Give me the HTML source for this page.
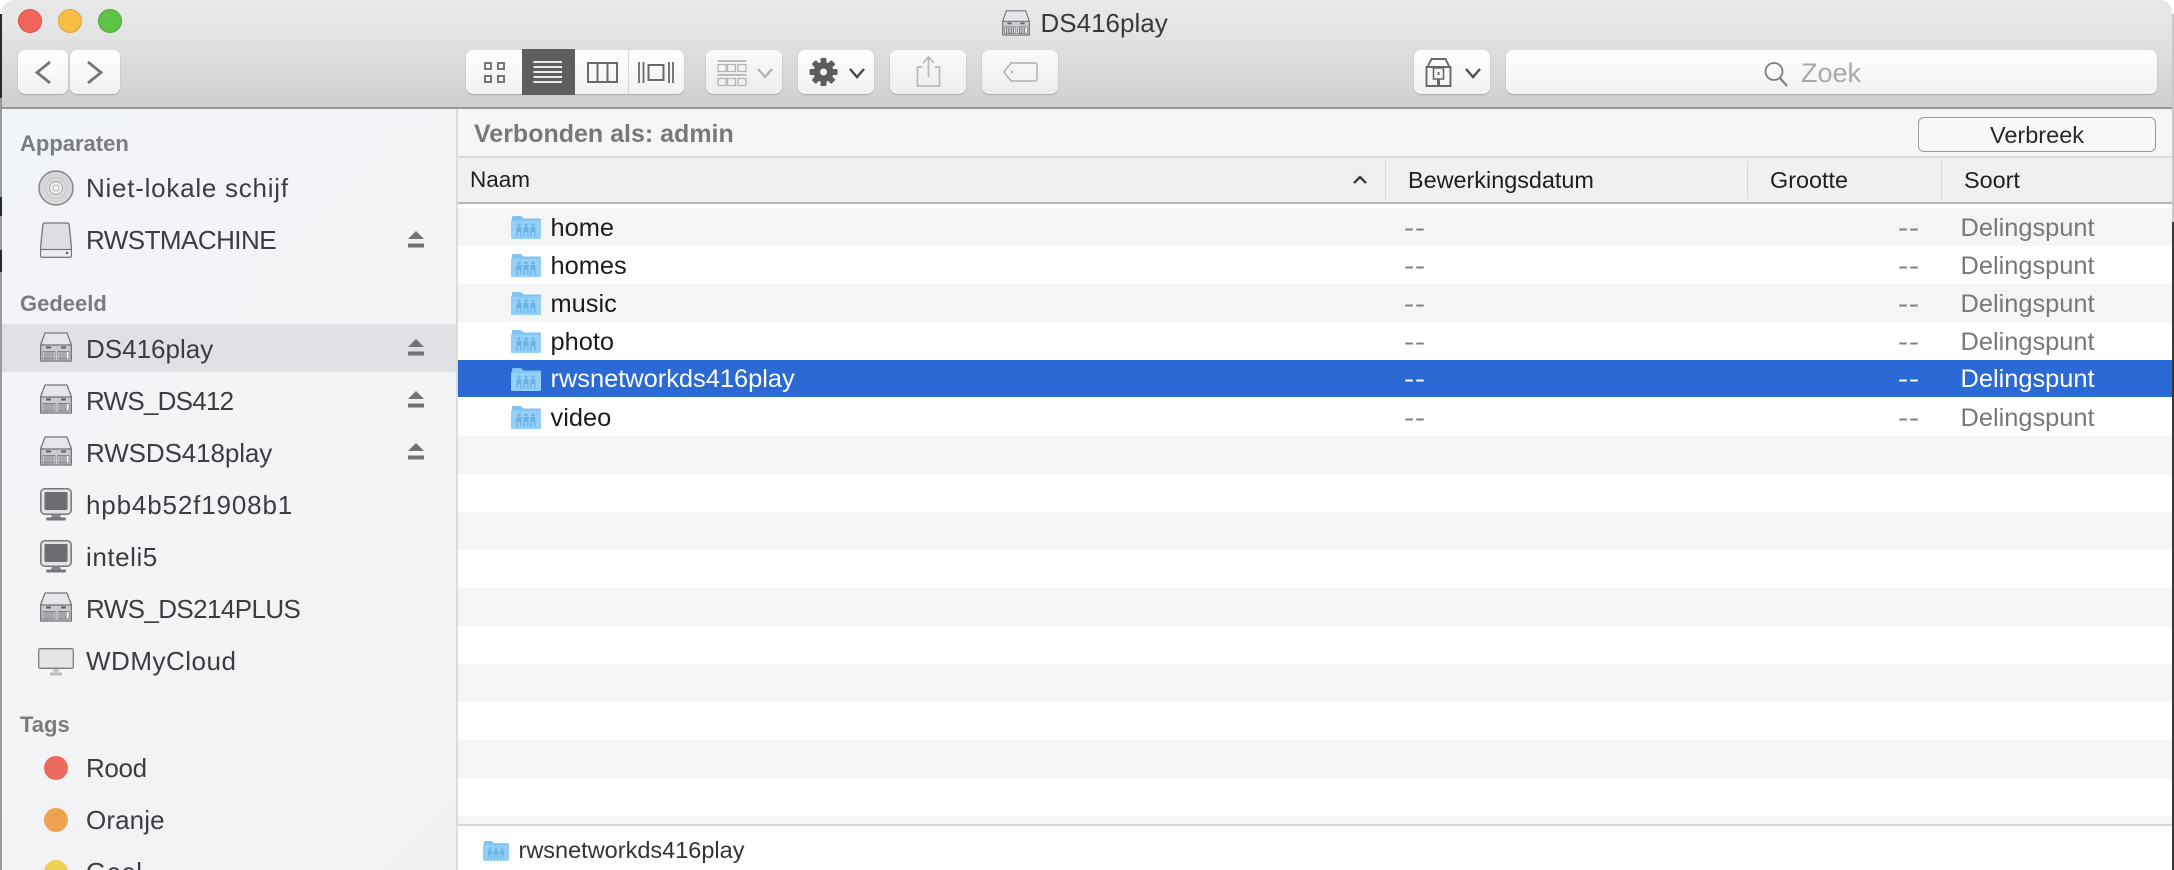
<!DOCTYPE html>
<html><head><meta charset="utf-8"><title>DS416play</title>
<style>
html,body{margin:0;padding:0;width:2174px;height:870px;overflow:hidden;background:#fff}
body{position:relative;font-family:"Liberation Sans",sans-serif}
div,span,svg{position:absolute}
.t{white-space:nowrap;line-height:40px;height:40px}
.btn{top:50px;height:44px;border-radius:7px;background:linear-gradient(#fff,#f1f1f1);box-shadow:0 1px 1px #a8a8a8,0 0 1px #bbb}
.dim{background:linear-gradient(#fafafa,#ededed)}
.side{left:86px;font-size:26px;color:#3a3d42;letter-spacing:.35px}
.head{left:20px;font-size:22px;font-weight:bold;color:#7a7c7f}
.r{left:458px;width:1714px;height:38px}
.n{left:550.5px;font-size:25.4px;color:#1c1c1c}
.d1{left:1404px;font-size:25.4px;color:#7f7f7f;letter-spacing:.6px;transform:scaleX(1.2);transform-origin:0 50%}
.d2{left:1898px;font-size:25.4px;color:#7f7f7f;letter-spacing:.6px;transform:scaleX(1.2);transform-origin:0 50%}
.s{left:1960.5px;font-size:25.4px;color:#77787a}
.h{font-size:23.4px;color:#1f1f1f;top:160px}
.sel{color:#fff}
</style></head><body>
<svg width="0" height="0" style="left:0;top:0">
<defs>
<symbol id="nas" viewBox="0 0 32 30">
<path d="M5 1H27L31.5 13V28.5H.5V13Z" fill="#e4e6e9" stroke="#74777b" stroke-width="1.3"/>
<rect x=".7" y="13" width="30.6" height="16" fill="#c9cbce" stroke="#74777b" stroke-width="1.3"/>
<path d="M6 15.5h5M21 15.5h5" stroke="#5d6064" stroke-width="2"/>
<rect x="3" y="19.5" width="12" height="7.5" fill="#fff" stroke="#6a6d71" stroke-width=".8"/>
<rect x="18" y="19.5" width="11" height="7.5" fill="#fff" stroke="#6a6d71" stroke-width=".8"/>
<path d="M5 20v7M7 20v7M9 20v7M11 20v7M13 20v7M20 20v7M22 20v7M24 20v7M26 20v7" stroke="#6a6d71" stroke-width="1.2"/>
</symbol>
<symbol id="pc" viewBox="0 0 32 33">
<rect x=".8" y=".8" width="30.4" height="25.4" rx="4" fill="#e2e4e6" stroke="#74777b" stroke-width="1.5"/>
<rect x="4.5" y="4" width="23" height="18" rx="1.5" fill="#6b6d70"/>
<path d="M12 26.5h8l1 3H11Z" fill="#85888b"/><rect x="6" y="29.5" width="20" height="3" rx="1.2" fill="#74777b"/>
</symbol>
<symbol id="mon" viewBox="0 0 36 28">
<rect x=".7" y=".7" width="34.6" height="19.6" rx="1.8" fill="#e4e5e7" stroke="#7a7d81" stroke-width="1.3"/>
<path d="M15 21h6v3.5h-6Z" fill="#c8cacc"/><rect x="12" y="24.5" width="12" height="3" fill="#bcbec1"/>
</symbol>
<symbol id="ej" viewBox="0 0 16 17">
<path d="M8 0 16 8H0Z" fill="#6f7276"/><rect y="12.5" width="16" height="4" fill="#6f7276"/>
</symbol>
<symbol id="fo" viewBox="0 0 30 24">
<path d="M1 2.5Q1 1 2.5 1H10L12.500 3.5H28.5Q30 3.5 30 5V22.5Q30 24 28.5 24H1.5Q0 24 0 22.5Z" fill="#80c2f0"/>
<path d="M0 5.5H30V22.5Q30 24 28.5 24H1.5Q0 24 0 22.5Z" fill="#93cff6"/>
<g fill="#6ab3e7"><circle cx="8" cy="10" r="1.500"/><circle cx="15" cy="10" r="1.500"/><circle cx="22" cy="10" r="1.500"/>
<path d="M5.500 12h5v10h-1.200v-5h-2.600v5H5.500ZM12.500 12h5v10h-1.200v-5h-2.600v5h-1.200ZM19.500 12h5v10h-1.200v-5h-2.600v5h-1.200Z"/></g>
</symbol>
</defs></svg>

<!-- window edges -->
<div style="left:0;top:0;width:2px;height:870px;background:#9a9a9a"></div>
<div style="left:0;top:14px;width:2px;height:84px;background:#2a2a2a"></div>
<div style="left:0;top:197px;width:2px;height:19px;background:#2a2a2a"></div>
<div style="left:0;top:250px;width:2px;height:22px;background:#2a2a2a"></div>
<div style="left:2172px;top:0;width:2px;height:222px;background:#c8c8c8"></div>
<div style="left:2172px;top:222px;width:2px;height:648px;background:#3a3735"></div>

<!-- toolbar -->
<div style="left:0;top:0;width:14px;height:14px;background:#fff"></div>
<div style="left:2160px;top:0;width:14px;height:14px;background:#fff"></div>
<div style="left:2px;top:0;width:2170px;height:108px;border-radius:12px 12px 0 0;background:linear-gradient(#e9e8e9 0,#e6e5e6 25%,#cfcfcf 100%)"></div>
<div style="left:2px;top:107px;width:2170px;height:2px;background:#9a9a9a"></div>
<div style="left:18px;top:9px;width:24px;height:24px;border-radius:50%;background:#f0645a;box-sizing:border-box;border:1px solid #dc5148"></div>
<div style="left:58px;top:9px;width:24px;height:24px;border-radius:50%;background:#f7bd45;box-sizing:border-box;border:1px solid #dfa23a"></div>
<div style="left:98px;top:9px;width:24px;height:24px;border-radius:50%;background:#5fc348;box-sizing:border-box;border:1px solid #4fa83c"></div>

<svg style="left:1000px;top:10px" width="32" height="26" viewBox="0 0 32 30"><use href="#nas"/></svg>
<div class="t" style="left:1040.5px;top:3px;font-size:26px;color:#3a3a3a">DS416play</div>

<div class="btn" style="left:18px;width:50px"></div>
<div class="btn" style="left:70px;width:50px"></div>
<svg style="left:18px;top:50px" width="102" height="44" fill="none" stroke="#767676" stroke-width="2.800"><path d="M32 12 19 22.5 32 33M70 12 83 22.5 70 33"/></svg>

<div class="btn" style="left:466px;width:218px"></div>
<div style="left:522px;top:49px;width:53px;height:46px;background:#5e5e5e"></div>
<div style="left:628px;top:50px;width:1px;height:44px;background:#d8d8d8"></div>
<svg style="left:466px;top:50px" width="218" height="44" fill="none">
<g stroke="#777" stroke-width="2"><rect x="19" y="13" width="6" height="6"/><rect x="32" y="13" width="6" height="6"/><rect x="19" y="26" width="6" height="6"/><rect x="32" y="26" width="6" height="6"/></g>
<path d="M67.5 12h28.5M67.5 17h28.5M67.5 22h28.5M67.5 27h28.5M67.5 32h28.5" stroke="#fff" stroke-width="1.800"/>
<g stroke="#6a6a6a" stroke-width="2"><rect x="122" y="13" width="29" height="19"/><path d="M131.5 13v19M141.5 13v19"/>
<path d="M173 12v21M177.5 12v21M203 12v21M207 12v21" stroke-width="1.800"/><rect x="182.5" y="15" width="15" height="15"/></g>
</svg>

<div class="btn dim" style="left:706px;width:76px"></div>
<svg style="left:706px;top:50px" width="76" height="44" fill="none" stroke="#b4b4b4" stroke-width="1.700">
<path d="M11.5 11h29M11.5 25h29"/><path d="M12 14.5h8v7h-8zM21.500 14.5h8v7h-8zM32 14.5h8v7h-8zM12 28.5h8v7h-8zM21.500 28.5h8v7h-8zM32 28.5h8v7h-8z" stroke-width="1.300"/>
<path d="M52 19l7 8 7-8" stroke-width="2.400"/></svg>

<div class="btn" style="left:798px;width:76px"></div>
<svg style="left:798px;top:50px" width="76" height="44">
<g transform="translate(25.5 22)"><circle r="10" fill="#5d5d5d"/><g fill="#5d5d5d"><rect x="-3" y="-14" width="6" height="28" rx="1"/><rect x="-3" y="-14" width="6" height="28" rx="1" transform="rotate(45)"/><rect x="-3" y="-14" width="6" height="28" rx="1" transform="rotate(90)"/><rect x="-3" y="-14" width="6" height="28" rx="1" transform="rotate(135)"/></g><circle r="3.5" fill="#f4f4f4"/></g>
<path d="M52 19l7 8 7-8" fill="none" stroke="#474747" stroke-width="2.400"/></svg>

<div class="btn dim" style="left:890px;width:76px"></div>
<svg style="left:890px;top:50px" width="76" height="44" fill="none" stroke="#b9b9b9" stroke-width="1.700">
<path d="M32 17h-4.500v19h22V17H45M38.500 27V8M33 13 38.500 7 44 13"/></svg>

<div class="btn dim" style="left:982px;width:76px"></div>
<svg style="left:982px;top:50px" width="76" height="44" fill="none" stroke="#b9b9b9" stroke-width="1.700">
<path d="M29 13h24q2 0 2 2v14q0 2-2 2H29l-7-9Z"/><circle cx="30" cy="22" r="1.200" fill="#b0b0b0" stroke="none"/></svg>

<div class="btn" style="left:1414px;width:76px"></div>
<svg style="left:1414px;top:50px" width="76" height="44" fill="none" stroke="#686868" stroke-width="1.900">
<path d="M13.500 17 17.500 9h14l4 8M12.500 17h24v19h-24Z"/><path d="M19.500 18h10v11h-10z" stroke-width="1.600"/><path d="M24.500 29v7" stroke-width="3"/><rect x="23.500" y="22" width="2" height="3" fill="#686868" stroke="none"/>
<path d="M52 19l7 8 7-8" stroke-width="2.400" stroke="#505050"/></svg>

<div class="btn" style="left:1506px;width:651px"></div>
<svg style="left:1762px;top:60px" width="30" height="28" fill="none" stroke="#7e7e7e" stroke-width="1.800"><circle cx="12" cy="11.500" r="8.500"/><path d="M18 18l7 8" stroke-width="2.200"/></svg>
<div class="t" style="left:1801px;top:53px;font-size:27px;color:#a9a9a9">Zoek</div>

<!-- sidebar -->
<div style="left:2px;top:109px;width:454px;height:761px;background:linear-gradient(135deg,#f1f4f8 0%,#f3f4f6 50%,#f1f1f1 100%)"></div>
<div style="left:456px;top:109px;width:2px;height:761px;background:#dcdcdc"></div>
<div style="left:2px;top:324px;width:454px;height:48px;background:#dfe1e4"></div>

<div class="t head" style="top:124px">Apparaten</div>
<div class="t head" style="top:284px">Gedeeld</div>
<div class="t head" style="top:705px">Tags</div>

<svg style="left:38px;top:170px" width="36" height="36"><circle cx="18" cy="18" r="17" fill="#d5d6d8" stroke="#85878a" stroke-width="1.500"/><circle cx="18" cy="18" r="10" fill="#dcdde0" stroke="#c4c5c8"/><circle cx="18" cy="18" r="6.500" fill="#eceded" stroke="#a2a4a7"/><circle cx="18" cy="18" r="3" fill="#f6f6f7" stroke="#b4b6b9"/></svg>
<div class="t side" style="top:168px;letter-spacing:.75px">Niet-lokale schijf</div>

<svg style="left:40px;top:222px" width="32" height="36" viewBox="0 0 32 36"><path d="M4.500 1H27.500Q29 1 29.200 3L31.500 26V33Q31.500 35.300 29 35.300H3Q.5 35.300 .5 33V26L2.800 3Q3 1 4.500 1Z" fill="#dcdee1" stroke="#75787c" stroke-width="1.300"/><path d="M1 27.500H31" stroke="#75787c" stroke-width="1.200"/><path d="M1.300 28.200H30.700V33Q30.700 34.600 29 34.600H3Q1.300 34.600 1.300 33Z" fill="#eceef0"/><circle cx="27" cy="31" r="1.200" fill="#555"/></svg>
<div class="t side" style="top:220px;letter-spacing:-.54px">RWSTMACHINE</div>

<svg style="left:40px;top:332px" width="32" height="30"><use href="#nas"/></svg>
<div class="t side" style="top:329px;letter-spacing:0">DS416play</div>
<svg style="left:40px;top:384px" width="32" height="30"><use href="#nas"/></svg>
<div class="t side" style="top:381px;letter-spacing:-.75px">RWS_DS412</div>
<svg style="left:40px;top:436px" width="32" height="30"><use href="#nas"/></svg>
<div class="t side" style="top:433px;letter-spacing:-.1px">RWSDS418play</div>
<svg style="left:40px;top:488px" width="32" height="33"><use href="#pc"/></svg>
<div class="t side" style="top:485px;letter-spacing:.85px">hpb4b52f1908b1</div>
<svg style="left:40px;top:540px" width="32" height="33"><use href="#pc"/></svg>
<div class="t side" style="top:537px;letter-spacing:.55px">inteli5</div>
<svg style="left:40px;top:592px" width="32" height="30"><use href="#nas"/></svg>
<div class="t side" style="top:589px;letter-spacing:-.6px">RWS_DS214PLUS</div>
<svg style="left:38px;top:648px" width="36" height="28"><use href="#mon"/></svg>
<div class="t side" style="top:641px;letter-spacing:.5px">WDMyCloud</div>

<svg style="left:408px;top:231px" width="16" height="17"><use href="#ej"/></svg>
<svg style="left:408px;top:339px" width="16" height="17"><use href="#ej"/></svg>
<svg style="left:408px;top:391px" width="16" height="17"><use href="#ej"/></svg>
<svg style="left:408px;top:443px" width="16" height="17"><use href="#ej"/></svg>

<div style="left:44px;top:756px;width:24px;height:24px;border-radius:50%;background:#ec6a60"></div>
<div class="t side" style="top:748px;letter-spacing:-.35px">Rood</div>
<div style="left:44px;top:808px;width:24px;height:24px;border-radius:50%;background:#eda34f"></div>
<div class="t side" style="top:800px;letter-spacing:.1px">Oranje</div>
<div style="left:44px;top:860px;width:24px;height:24px;border-radius:50%;background:#ebd052"></div>
<div class="t side" style="top:852px">Geel</div>

<!-- info bar -->
<div style="left:458px;top:109px;width:1714px;height:48px;background:#f6f6f6"></div>
<div class="t" style="left:474px;top:114px;font-size:25px;font-weight:bold;color:#77787a">Verbonden als: admin</div>
<div style="left:1918px;top:117px;width:238px;height:35px;box-sizing:border-box;border:1.5px solid #9a9a9a;border-radius:6px;background:#f8f8f8"></div>
<div class="t" style="left:1918px;width:238px;text-align:center;top:114.5px;font-size:23.5px;color:#2a2a2a">Verbreek</div>

<!-- column header -->
<div style="left:458px;top:156px;width:1714px;height:2px;background:#d9d9d9"></div>
<div style="left:458px;top:158px;width:1714px;height:44px;background:#f0f0f0"></div>
<div style="left:458px;top:202px;width:1714px;height:2px;background:#b5b5b5"></div>
<div style="left:1385px;top:161px;width:1px;height:38px;background:#d6d6d6"></div>
<div style="left:1747px;top:161px;width:1px;height:38px;background:#d6d6d6"></div>
<div style="left:1941px;top:161px;width:1px;height:38px;background:#d6d6d6"></div>
<div class="t h" style="left:470px;font-size:22.5px">Naam</div>
<svg style="left:1352px;top:174px" width="16" height="11" fill="none" stroke="#3c3c3c" stroke-width="2.300"><path d="M2 9l6-6 6 6"/></svg>
<div class="t h" style="left:1408px">Bewerkingsdatum</div>
<div class="t h" style="left:1770px">Grootte</div>
<div class="t h" style="left:1964px">Soort</div>

<!-- rows -->
<div class="r" style="top:208px;background:#f5f5f5"></div>
<div class="r" style="top:284px;background:#f5f5f5"></div>
<div class="r" style="top:360px;height:37px;background:#2b69d5"></div>
<div class="r" style="top:436px;background:#f5f5f5"></div>
<div class="r" style="top:512px;background:#f5f5f5"></div>
<div class="r" style="top:588px;background:#f5f5f5"></div>
<div class="r" style="top:664px;background:#f5f5f5"></div>
<div class="r" style="top:740px;background:#f5f5f5"></div>
<div class="r" style="top:816px;height:8px;background:#f5f5f5"></div>

<svg style="left:511px;top:215px" width="30" height="24"><use href="#fo"/></svg>
<div class="t n" style="top:208px">home</div><div class="t d1" style="top:208px">--</div><div class="t d2" style="top:208px">--</div><div class="t s" style="top:208px">Delingspunt</div>
<svg style="left:511px;top:253px" width="30" height="24"><use href="#fo"/></svg>
<div class="t n" style="top:246px">homes</div><div class="t d1" style="top:246px">--</div><div class="t d2" style="top:246px">--</div><div class="t s" style="top:246px">Delingspunt</div>
<svg style="left:511px;top:291px" width="30" height="24"><use href="#fo"/></svg>
<div class="t n" style="top:284px">music</div><div class="t d1" style="top:284px">--</div><div class="t d2" style="top:284px">--</div><div class="t s" style="top:284px">Delingspunt</div>
<svg style="left:511px;top:329px" width="30" height="24"><use href="#fo"/></svg>
<div class="t n" style="top:322px">photo</div><div class="t d1" style="top:322px">--</div><div class="t d2" style="top:322px">--</div><div class="t s" style="top:322px">Delingspunt</div>
<svg style="left:511px;top:367px" width="30" height="24"><use href="#fo"/></svg>
<div class="t n sel" style="top:359px">rwsnetworkds416play</div><div class="t d1 sel" style="top:359px">--</div><div class="t d2 sel" style="top:359px">--</div><div class="t s sel" style="top:359px">Delingspunt</div>
<svg style="left:511px;top:405px" width="30" height="24"><use href="#fo"/></svg>
<div class="t n" style="top:398px">video</div><div class="t d1" style="top:398px">--</div><div class="t d2" style="top:398px">--</div><div class="t s" style="top:398px">Delingspunt</div>

<!-- footer -->
<div style="left:458px;top:824px;width:1714px;height:2px;background:#d4d4d4"></div>
<svg style="left:483px;top:840px" width="26" height="21" viewBox="0 0 30 24"><use href="#fo"/></svg>
<div class="t" style="left:518.5px;top:830px;font-size:23.5px;color:#333">rwsnetworkds416play</div>
</body></html>
